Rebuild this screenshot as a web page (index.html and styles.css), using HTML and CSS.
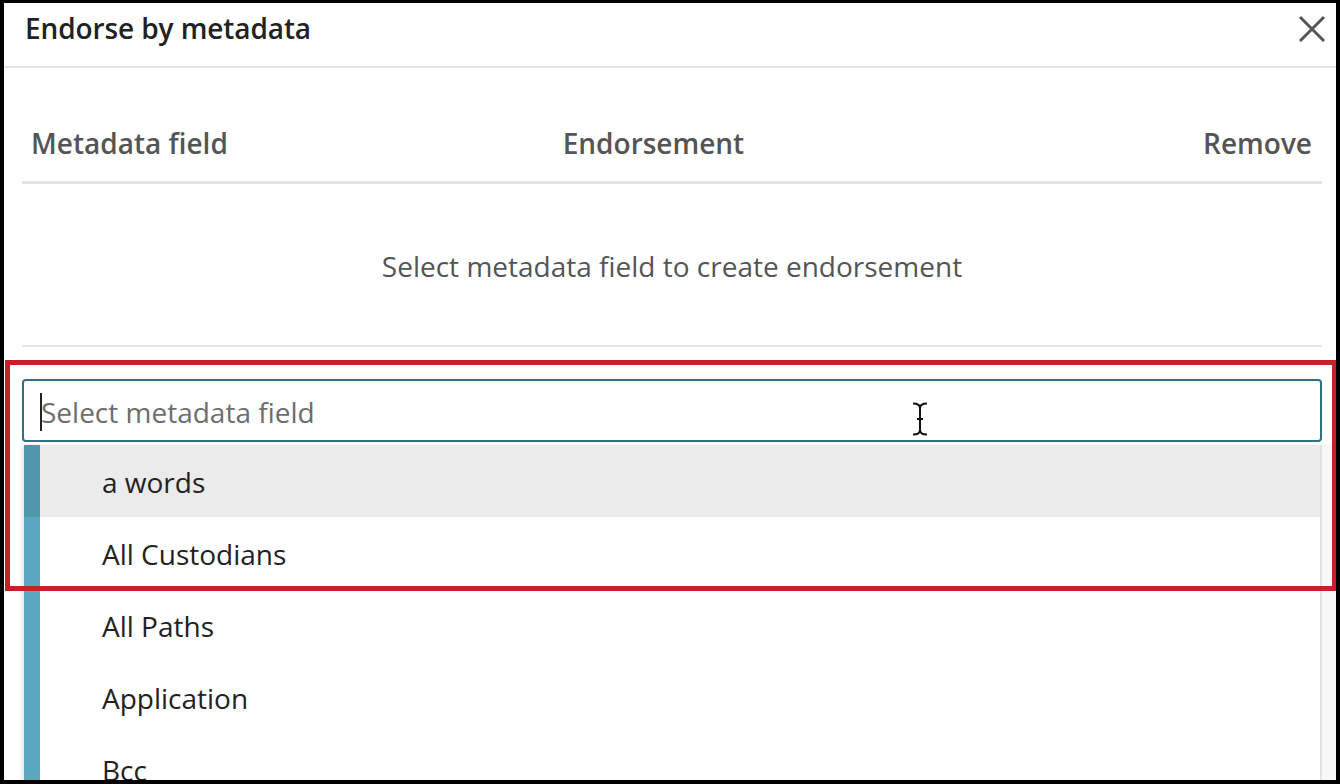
FILE: index.html
```html
<!DOCTYPE html>
<html lang="en">
<head>
<meta charset="utf-8">
<title>Endorse by metadata</title>
<link rel="stylesheet" href="styles.css">
</head>
<body>
<div class="frame">
  <header class="dlg-head">
    <h1 class="dlg-title">Endorse by metadata</h1>
    <button class="close" aria-label="Close">
      <svg width="28" height="28" viewBox="0 0 28 28"><path d="M2 2 L26 26 M26 2 L2 26" stroke="#555" stroke-width="3" fill="none"/></svg>
    </button>
  </header>
  <main class="dlg-body">
    <div class="cols">
      <span class="col col-left">Metadata field</span>
      <span class="col col-mid">Endorsement</span>
      <span class="col col-right">Remove</span>
    </div>
    <div class="empty">Select metadata field to create endorsement</div>
    <div class="picker">
      <div class="input"><span class="caret"></span><span class="ph">Select metadata field</span></div>
      <div class="drop">
        <ul class="list">
          <li class="item hover">a words</li>
          <li class="item">All Custodians</li>
          <li class="item">All Paths</li>
          <li class="item">Application</li>
          <li class="item">Bcc</li>
        </ul>
        <div class="track"></div>
      </div>
    </div>
  </main>
  <div class="highlight"></div>
  <svg class="ibeam" width="18" height="34" viewBox="0 0 18 34"><path d="M2 1.5 C6 1.5 9 3 9 6 C9 3 12 1.5 16 1.5 M9 6 V28 M6 17 H12 M2 32.5 C6 32.5 9 31 9 28 C9 31 12 32.5 16 32.5" stroke="#111" stroke-width="2" fill="none"/></svg>
</div>
</body>
</html>
```
FILE: styles.css
```css
* { box-sizing: border-box; }
html, body { margin: 0; padding: 0; }
body {
  background: #000;
  font-family: "Open Sans", "Liberation Sans", sans-serif;
  width: 1340px;
  height: 784px;
  overflow: hidden;
}
.frame {
  position: relative;
  margin: 3px 4px 0 4px;
  height: 777px;
  background: #fff;
  overflow: hidden;
}
.dlg-head {
  height: 65px;
  border-bottom: 2px solid #e3e3e3;
  display: flex;
  align-items: center;
  justify-content: space-between;
  padding: 0 10px 13px 21px;
}
.dlg-title {
  margin: 0;
  font-size: 28px;
  font-weight: 600;
  color: #222;
  letter-spacing: -0.1px;
}
.close {
  border: 0;
  background: none;
  padding: 0;
  width: 28px;
  height: 28px;
  margin-top: 2px;
  display: flex;
}
.dlg-body {
  padding: 0 14px 0 18px;
}
.cols {
  display: flex;
  justify-content: space-between;
  align-items: center;
  height: 116px;
  padding: 36px 10px 0 9px;
  border-bottom: 3px solid #e3e3e3;
  font-size: 28px;
  font-weight: 600;
  color: #555;
}
.col-mid { margin-right: 124px; }
.empty {
  height: 163px;
  border-bottom: 2px solid #e6e6e6;
  display: flex;
  align-items: center;
  justify-content: center;
  font-size: 28px;
  color: #555;
  padding-top: 2px;
}
.picker {
  padding-top: 32px;
}
.input {
  height: 63px;
  border: 2px solid #2f7383;
  border-radius: 4px;
  display: flex;
  align-items: center;
  padding-left: 16px;
  padding-top: 2px;
  font-size: 28px;
  color: #6d6d6d;
}
.caret {
  width: 2px;
  height: 38px;
  background: #222;
  margin-right: -1px;
}
.drop {
  display: flex;
  margin-top: 3px;
  margin-left: 2px;
  margin-right: -14px;
  box-shadow: -3px 0 3px rgba(0,0,0,0.08);
}
.list {
  list-style: none;
  margin: 0;
  padding: 0;
  flex: 1;
  border-right: 2px solid #e3e3e3;
}
.item {
  height: 72px;
  display: flex;
  align-items: center;
  padding-left: 62px;
  padding-top: 2px;
  border-left: 16px solid #5aa7bf;
  font-size: 28px;
  color: #222;
}
.item.hover {
  background: #ebebeb;
  border-left-color: #4f97ab;
}
.track {
  width: 14px;
  background: #f8f8f8;
}
.highlight {
  position: absolute;
  left: 1px;
  top: 357px;
  width: 1332px;
  height: 231px;
  border: 5px solid #c91f2b;
  pointer-events: none;
}
.ibeam {
  position: absolute;
  left: 907px;
  top: 399px;
}
```
